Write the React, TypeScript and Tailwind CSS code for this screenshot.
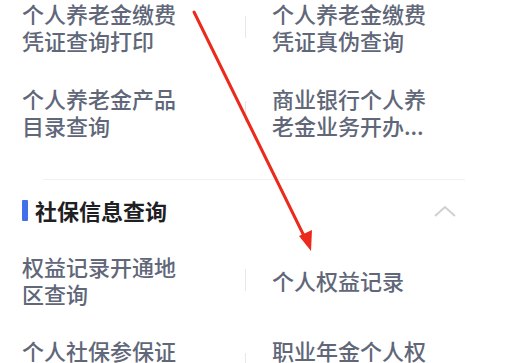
const rowsTop = [
  { left: ['个人养老金缴费', '凭证查询打印'], right: ['个人养老金缴费', '凭证真伪查询'] },
  { left: ['个人养老金产品', '目录查询'], right: ['商业银行个人养', '老金业务开办...'] },
]

const rowsBottom = [
  { left: ['权益记录开通地', '区查询'], right: ['个人权益记录'] },
  { left: ['个人社保参保证', '明查询'], right: ['职业年金个人权', '益查询'] },
]

type Row = { left: string[]; right: string[] }

function ServiceRow({ row }: { row: Row }) {
  return (
    <div className="flex h-[54px] items-center">
      <div className="w-[245px] shrink-0 pl-[22px]">
        {row.left.map((l) => (
          <div key={l}>{l}</div>
        ))}
      </div>
      <div className="h-[22px] w-px bg-[#e6e7ea]" />
      <div className="pl-[26px]">
        {row.right.map((l) => (
          <div key={l}>{l}</div>
        ))}
      </div>
    </div>
  )
}

export default function App() {
  return (
    <div
      className="relative h-[363px] w-[508px] overflow-hidden bg-white text-[22px] font-medium leading-[27px] text-[#5f6779]"
      style={{ fontFamily: '"Noto Sans CJK SC", "Noto Sans", sans-serif' }}
    >
      <div className="flex flex-col gap-[31px]">
        {rowsTop.map((r, i) => (
          <ServiceRow key={i} row={r} />
        ))}
      </div>

      {/* divider */}
      <div className="mx-[43px] mt-[40px] h-px bg-[#f0f1f3]" />

      {/* section header */}
      <div className="mt-[17px] flex items-center justify-between pl-[22px] pr-[52px]">
        <div className="flex items-center gap-[7px]">
          <span className="h-[21px] w-[6px] rounded-[1px] bg-[#4170ea]" />
          <span className="text-[22px] font-bold leading-[27px] text-[#1f2023]">社保信息查询</span>
        </div>
        <svg width="22" height="12" viewBox="0 0 22 12" fill="none">
          <path d="M1 11 L11 2 L21 11" stroke="#cfd0d4" strokeWidth="2" />
        </svg>
      </div>

      <div className="mt-[29px] flex flex-col gap-[30px]">
        {rowsBottom.map((r, i) => (
          <ServiceRow key={i} row={r} />
        ))}
      </div>

      {/* red annotation arrow */}
      <svg className="pointer-events-none absolute left-0 top-0" width="508" height="363" viewBox="0 0 508 363">
        <line x1="194" y1="12" x2="305" y2="238" stroke="#ec2a1c" strokeWidth="3" strokeLinecap="round" />
        <polygon points="311,251 299,236 312,230" fill="#ec2a1c" />
      </svg>
    </div>
  )
}
